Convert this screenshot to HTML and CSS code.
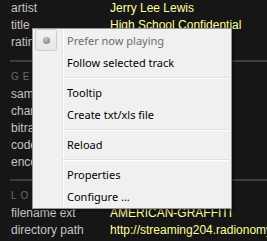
FILE: index.html
```html
<!DOCTYPE html>
<html>
<head>
<meta charset="utf-8">
<link rel="stylesheet" href="styles.css">
</head>
<body>
<div class="panel">
  <div class="section first">
    <div class="row"><span class="label">artist</span><span class="value">Jerry Lee Lewis</span></div>
    <div class="row"><span class="label">title</span><span class="value">High School Confidential</span></div>
    <div class="row"><span class="label">rating</span><span class="value"></span></div>
  </div>
  <div class="sep"></div>
  <div class="header">GENERAL</div>
  <div class="section">
    <div class="row"><span class="label">samplerate</span><span class="value">44100 Hz</span></div>
    <div class="row"><span class="label">channels</span><span class="value">2</span></div>
    <div class="row"><span class="label">bitrate</span><span class="value">128 kbps</span></div>
    <div class="row"><span class="label">codec</span><span class="value">MP3</span></div>
    <div class="row"><span class="label">encoding</span><span class="value">lossy</span></div>
  </div>
  <div class="sep sep2"></div>
  <div class="header">LOCATION</div>
  <div class="section">
    <div class="row"><span class="label">filename ext</span><span class="value">AMERICAN-GRAFFITI</span></div>
    <div class="row"><span class="label">directory path</span><span class="value">http://streaming204.radionomy.com</span></div>
  </div>
</div>

<div class="menu">
  <div class="gutter"></div>
  <div class="item disabled">
    <span class="check"><span class="dot"></span></span>
    <span class="text">Prefer now playing</span>
  </div>
  <div class="item"><span class="text">Follow selected track</span></div>
  <div class="msep"></div>
  <div class="item"><span class="text">Tooltip</span></div>
  <div class="item"><span class="text">Create txt/xls file</span></div>
  <div class="msep"></div>
  <div class="item"><span class="text">Reload</span></div>
  <div class="msep"></div>
  <div class="item"><span class="text">Properties</span></div>
  <div class="item"><span class="text">Configure ...</span></div>
</div>
</body>
</html>
```
FILE: styles.css
```css
html, body {
  margin: 0;
  padding: 0;
  background: #161616;
  width: 267px;
  height: 241px;
  overflow: hidden;
}
body {
  position: relative;
  font-family: "Liberation Sans", Arial, sans-serif;
  font-size: 12px;
}
.panel {
  padding-left: 10px;
}
.row {
  display: flex;
  height: 17px;
  line-height: 17px;
  white-space: nowrap;
}
.label {
  width: 99px;
  padding-left: 1px;
  flex: none;
  color: #c4c4c4;
}
.value {
  flex: 1;
  min-width: 0;
  overflow: hidden;
  color: #ffff9c;
}
.section.first {
  padding-bottom: 1px;
}
.sep {
  margin-top: 8px;
  height: 2px;
  background: #3c3c3c;
}
.header {
  height: 24px;
  box-sizing: border-box;
  padding-top: 9px;
  padding-left: 1px;
  line-height: 12px;
  font-size: 10px;
  letter-spacing: 4px;
  color: #6a6a6a;
}

.menu {
  position: absolute;
  left: 32px;
  top: 28px;
  width: 200px;
  height: 181px;
  box-sizing: border-box;
  background: #f0f0f0;
  border: 1px solid #979797;
  padding: 0 2px;
  box-shadow: 2px 2px 2px rgba(0,0,0,0.4);
  font-family: "Noto Sans", "Open Sans", sans-serif;
  font-size: 11px;
}
.gutter {
  position: absolute;
  left: 29px;
  top: 1px;
  bottom: 1px;
  width: 1px;
  background: #e2e3e3;
  border-right: 1px solid #ffffff;
}
.item {
  position: relative;
  height: 22px;
  display: flex;
  align-items: center;
  padding-left: 32px;
  color: #000;
}
.item.disabled {
  color: #6d6d6d;
}
.check {
  position: absolute;
  left: 0;
  top: 0;
  width: 22px;
  height: 22px;
  box-sizing: border-box;
  border: 1px solid #cdcdcd;
  border-radius: 3px;
  background: linear-gradient(#f2f2f2, #e6e6e6);
  display: flex;
  align-items: center;
  justify-content: center;
}
.dot {
  width: 7px;
  height: 7px;
  border-radius: 50%;
  background: radial-gradient(circle at 40% 35%, #c8c8c8, #8a8a8a 70%);
}
.msep {
  height: 8px;
  margin-left: 28px;
  position: relative;
}
.msep::before {
  content: "";
  position: absolute;
  left: 0;
  right: 0;
  top: 4px;
  height: 1px;
  background: #e0e0e0;
  border-bottom: 1px solid #ffffff;
}
```
